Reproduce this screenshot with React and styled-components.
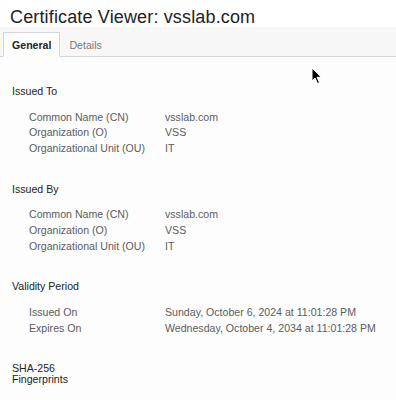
import React from 'react';
import styled, { createGlobalStyle } from 'styled-components';

const sections = [
  {
    title: 'Issued To',
    rows: [
      ['Common Name (CN)', 'vsslab.com'],
      ['Organization (O)', 'VSS'],
      ['Organizational Unit (OU)', 'IT'],
    ],
  },
  {
    title: 'Issued By',
    rows: [
      ['Common Name (CN)', 'vsslab.com'],
      ['Organization (O)', 'VSS'],
      ['Organizational Unit (OU)', 'IT'],
    ],
  },
  {
    title: 'Validity Period',
    rows: [
      ['Issued On', 'Sunday, October 6, 2024 at 11:01:28 PM'],
      ['Expires On', 'Wednesday, October 4, 2034 at 11:01:28 PM'],
    ],
  },
  {
    title: 'SHA-256 Fingerprints',
    rows: [
      ['Certificate', '4f3b8a1c 9d2e7f60 5a1b3c4d 8e9f0a1b 2c3d4e5f 6a7b8c9d'],
    ],
  },
];

const App = () => {
  return <Page>
    <GlobalStyle />
    <Title>Certificate Viewer: vsslab.com</Title>
    <TabBar>
      <Tab active>General</Tab>
      <Tab>Details</Tab>
    </TabBar>
    <Content>
      {sections.map((section, index) => (
        <Section key={index}>
          <SectionTitle>{section.title}</SectionTitle>
          <Rows>
            {section.rows.map(([label, value], i) => (
              <Row key={i}>
                <Label>{label}</Label>
                <Value>{value}</Value>
              </Row>
            ))}
          </Rows>
        </Section>
      ))}
    </Content>
    <Cursor width="12" height="18" viewBox="0 0 12 18">
      <path d="M1 1 L1 14 L4 11 L6.5 16.5 L8.5 15.6 L6 10.3 L10.2 10.3 Z" fill="#000" stroke="#fff" strokeWidth="1" />
    </Cursor>
  </Page>;
};

export default App;

const GlobalStyle = createGlobalStyle`
  html, body {
    margin:0;
    padding:0;
    background:#fdfdfd;
  }
  body {
    font-family:"Liberation Sans", Arial, sans-serif;
    overflow:hidden;
  }
`

const Page = styled.div`
  position:relative;
  width:396px;
  height:400px;
  overflow:hidden;
  background:#fdfdfd;
`

const Title = styled.div`
  background:#fff;
  height:27px;
  padding:7px 0 0 10px;
  box-sizing:border-box;
  font-size:18px;
  letter-spacing:0.15px;
  color:#222;
  line-height:20px;
`

const TabBar = styled.div`
  display:flex;
  align-items:flex-end;
  height:30px;
  box-sizing:border-box;
  padding-left:3px;
  background:#f7f7f7;
  border-bottom:1px solid #d6d6d6;
`

const Tab = styled.div`
  height:25px;
  box-sizing:border-box;
  margin-bottom:-1px;
  padding:0 8px;
  display:flex;
  align-items:center;
  font-size:10.6px;
  font-weight:${p => p.active ? 700 : 400};
  color:${p => p.active ? '#222' : '#7a7a7a'};
  background:${p => p.active ? '#fdfdfd' : 'transparent'};
  border:1px solid ${p => p.active ? '#d6d6d6' : 'transparent'};
  border-bottom-color:${p => p.active ? '#fdfdfd' : 'transparent'};
`

const Content = styled.div`
  padding:29px 0 0 12px;
  display:flex;
  flex-direction:column;
  gap:27.2px;
`

const Section = styled.div`
  display:flex;
  flex-direction:column;
  gap:12.7px;
`

const SectionTitle = styled.div`
  max-width:80px;
  font-size:10.6px;
  line-height:11px;
  color:#222;
`

const Rows = styled.div`
  display:flex;
  flex-direction:column;
  padding-left:17px;
`

const Row = styled.div`
  display:grid;
  grid-template-columns:136px 1fr;
  font-size:10.6px;
  line-height:15.6px;
  color:#5c5c5c;
  white-space:nowrap;
`

const Label = styled.div``

const Value = styled.div``

const Cursor = styled.svg`
  position:absolute;
  left:311px;
  top:67px;
`
